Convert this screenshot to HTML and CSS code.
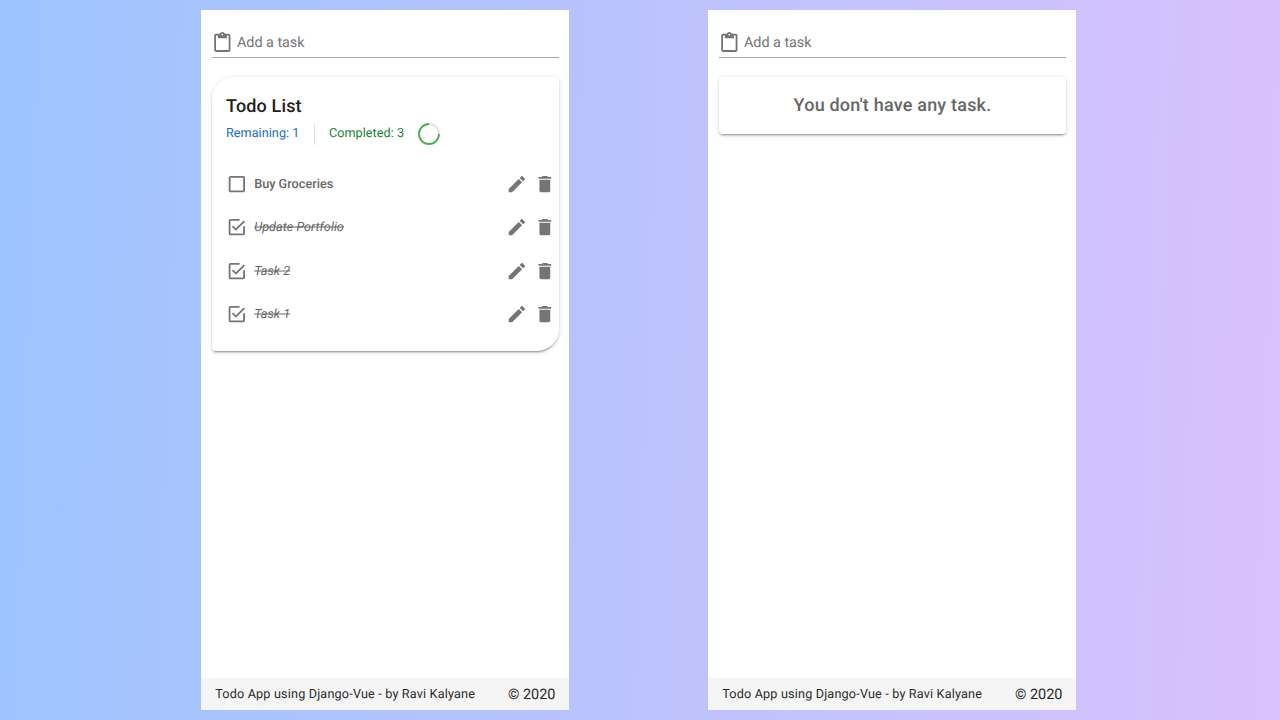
FILE: index.html
```
<!DOCTYPE html>
<html lang="en">
<head>
<meta charset="utf-8">
<title>Todo App</title>
<link rel="stylesheet" href="styles.css">
</head>
<body>
<svg class="sprite" aria-hidden="true">
  <symbol id="clipboard" viewBox="0 0 24 24"><path d="M19 2h-4.18C14.4.84 13.3 0 12 0S9.6.84 9.18 2H5c-1.1 0-2 .9-2 2v16c0 1.1.9 2 2 2h14c1.1 0 2-.9 2-2V4c0-1.1-.9-2-2-2zm-7 0c.55 0 1 .45 1 1s-.45 1-1 1-1-.45-1-1 .45-1 1-1zm7 18H5V4h2v3h10V4h2v16z"/></symbol>
  <symbol id="blank" viewBox="0 0 24 24"><path d="M19 5v14H5V5h14m0-2H5c-1.1 0-2 .9-2 2v14c0 1.1.9 2 2 2h14c1.1 0 2-.9 2-2V5c0-1.1-.9-2-2-2z"/></symbol>
  <symbol id="checked" viewBox="0 0 24 24"><path d="M19 19H5V5h10V3H5c-1.1 0-2 .9-2 2v14c0 1.1.9 2 2 2h14c1.1 0 2-.9 2-2v-8h-2v8M7.91 10.08L6.5 11.5 11 16 21 6l-1.41-1.42L11 13.17l-3.09-3.09z"/></symbol>
  <symbol id="pencil" viewBox="0 0 24 24"><path d="M3 17.25V21h3.75L17.81 9.94l-3.75-3.75L3 17.25zM20.71 7.04c.39-.39.39-1.02 0-1.41l-2.34-2.34c-.39-.39-1.02-.39-1.41 0l-1.83 1.83 3.75 3.75 1.83-1.83z"/></symbol>
  <symbol id="trash" viewBox="0 0 24 24"><path d="M6 19c0 1.1.9 2 2 2h8c1.1 0 2-.9 2-2V7H6v12zM19 4h-3.5l-1-1h-5l-1 1H5v2h14V4z"/></symbol>
</svg>

<main class="stage">
  <section class="phone">
    <div class="field"><svg class="icon"><use href="#clipboard"/></svg><span class="placeholder">Add a task</span></div>
    <div class="card list-card">
      <h1 class="title">Todo List</h1>
      <div class="stats">
        <span class="remaining">Remaining: 1</span>
        <span class="divider"></span>
        <span class="completed">Completed: 3</span>
        <svg class="progress" viewBox="0 0 22 22"><circle class="track" cx="11" cy="11" r="10"/><circle class="value" cx="11" cy="11" r="10" pathLength="100"/></svg>
      </div>
      <ul class="tasks">
        <li class="task"><svg class="icon"><use href="#blank"/></svg><span class="name">Buy Groceries</span><svg class="icon"><use href="#pencil"/></svg><svg class="icon"><use href="#trash"/></svg></li>
        <li class="task done"><svg class="icon"><use href="#checked"/></svg><span class="name">Update Portfolio</span><svg class="icon"><use href="#pencil"/></svg><svg class="icon"><use href="#trash"/></svg></li>
        <li class="task done"><svg class="icon"><use href="#checked"/></svg><span class="name">Task 2</span><svg class="icon"><use href="#pencil"/></svg><svg class="icon"><use href="#trash"/></svg></li>
        <li class="task done"><svg class="icon"><use href="#checked"/></svg><span class="name">Task 1</span><svg class="icon"><use href="#pencil"/></svg><svg class="icon"><use href="#trash"/></svg></li>
      </ul>
    </div>
    <footer class="footer"><span class="credit">Todo App using Django-Vue - by Ravi Kalyane</span><span class="year">© 2020</span></footer>
  </section>

  <section class="phone">
    <div class="field"><svg class="icon"><use href="#clipboard"/></svg><span class="placeholder">Add a task</span></div>
    <div class="card empty-card">You don't have any task.</div>
    <footer class="footer"><span class="credit">Todo App using Django-Vue - by Ravi Kalyane</span><span class="year">© 2020</span></footer>
  </section>
</main>
</body>
</html>
```
FILE: styles.css
```
* { box-sizing: border-box; }
body {
  margin: 0;
  height: 720px;
  overflow: hidden;
  font-family: Roboto, sans-serif;
  text-rendering: geometricPrecision;
  color: #2a2a2a;
  background: linear-gradient(92deg, #9dc4fe, #d9c1fc);
}
.sprite { display: none; }
.stage {
  display: flex;
  gap: 139px;
  padding: 10px 0 10px 201px;
  height: 720px;
}
.phone {
  display: flex;
  flex-direction: column;
  width: 368px;
  height: 700px;
  padding-top: 21px;
  background: #fff;
}
.icon {
  flex: none;
  width: 21.7px;
  height: 21.7px;
  fill: #757575;
}
.field {
  display: flex;
  align-items: center;
  height: 27px;
  margin: 0 10px 0 11px;
  padding-bottom: 3px;
  border-bottom: 1px solid #a8a8a8;
}
.field .icon {
  margin-left: -.9px;
  transform: translateX(.5px);
}
.placeholder {
  margin-left: 4.2px;
  font-size: 14.4px;
  line-height: 20px;
  letter-spacing: -.03px;
  color: #757575;
}
.card {
  margin: 19px 10px 0 11px;
  background: #fff;
  border-radius: 4px;
  box-shadow: 0 3px 1px -2px rgba(0,0,0,.2), 0 2px 2px 0 rgba(0,0,0,.14), 0 1px 5px 0 rgba(0,0,0,.12);
}
.list-card {
  height: 274px;
  padding-top: 18px;
  border-radius: 22px 4px 22px 4px;
}
.title {
  margin: 0 0 0 14px;
  font-size: 18px;
  font-weight: 500;
  line-height: 24px;
  letter-spacing: .15px;
  color: #212121;
  transform: translateY(-.4px);
}
.stats {
  display: flex;
  align-items: center;
  height: 22px;
  margin: 4px 0 0 14px;
  font-size: 12.65px;
  line-height: 20px;
  letter-spacing: .04px;
}
.remaining, .completed { transform: translateY(.4px); }
.remaining { color: #1a6fb5; }
.completed { color: #1b8333; }
.divider {
  width: 1px;
  height: 22px;
  margin: 0 14px 0 14.5px;
  background: #e4e4e4;
}
.progress {
  width: 22px;
  height: 22px;
  margin-left: 13.6px;
}
.progress circle { fill: none; stroke-width: 1.8; }
.track { stroke: #e0e0e0; }
.value {
  stroke: #4caf50;
  stroke-dasharray: 75 25;
}
.tasks {
  margin: 17.2px 0 0;
  padding: 0 3px 0 14px;
  list-style: none;
}
.task {
  display: flex;
  align-items: center;
  height: 43.4px;
}
.task .icon { transform: translateY(.3px); }
.task .icon + .icon { margin-left: 7px; }
.name {
  flex: 1;
  margin-left: 6.5px;
  font-size: 12.7px;
  font-weight: 500;
  line-height: 18px;
  color: #666;
  transform: translateY(.5px);
}
.done .name {
  font-weight: 400;
  font-style: italic;
  text-decoration: line-through;
}
.empty-card {
  height: 57px;
  font-size: 18px;
  font-weight: 500;
  line-height: 58px;
  letter-spacing: .2px;
  text-align: center;
  color: #666;
}
.footer {
  display: flex;
  align-items: center;
  justify-content: space-between;
  height: 32px;
  margin-top: auto;
  padding: 0 13.5px 0 14.2px;
  background: #f5f5f5;
}
.credit { font-size: 12.65px; letter-spacing: .17px; }
.year { font-size: 14.5px; }
```
